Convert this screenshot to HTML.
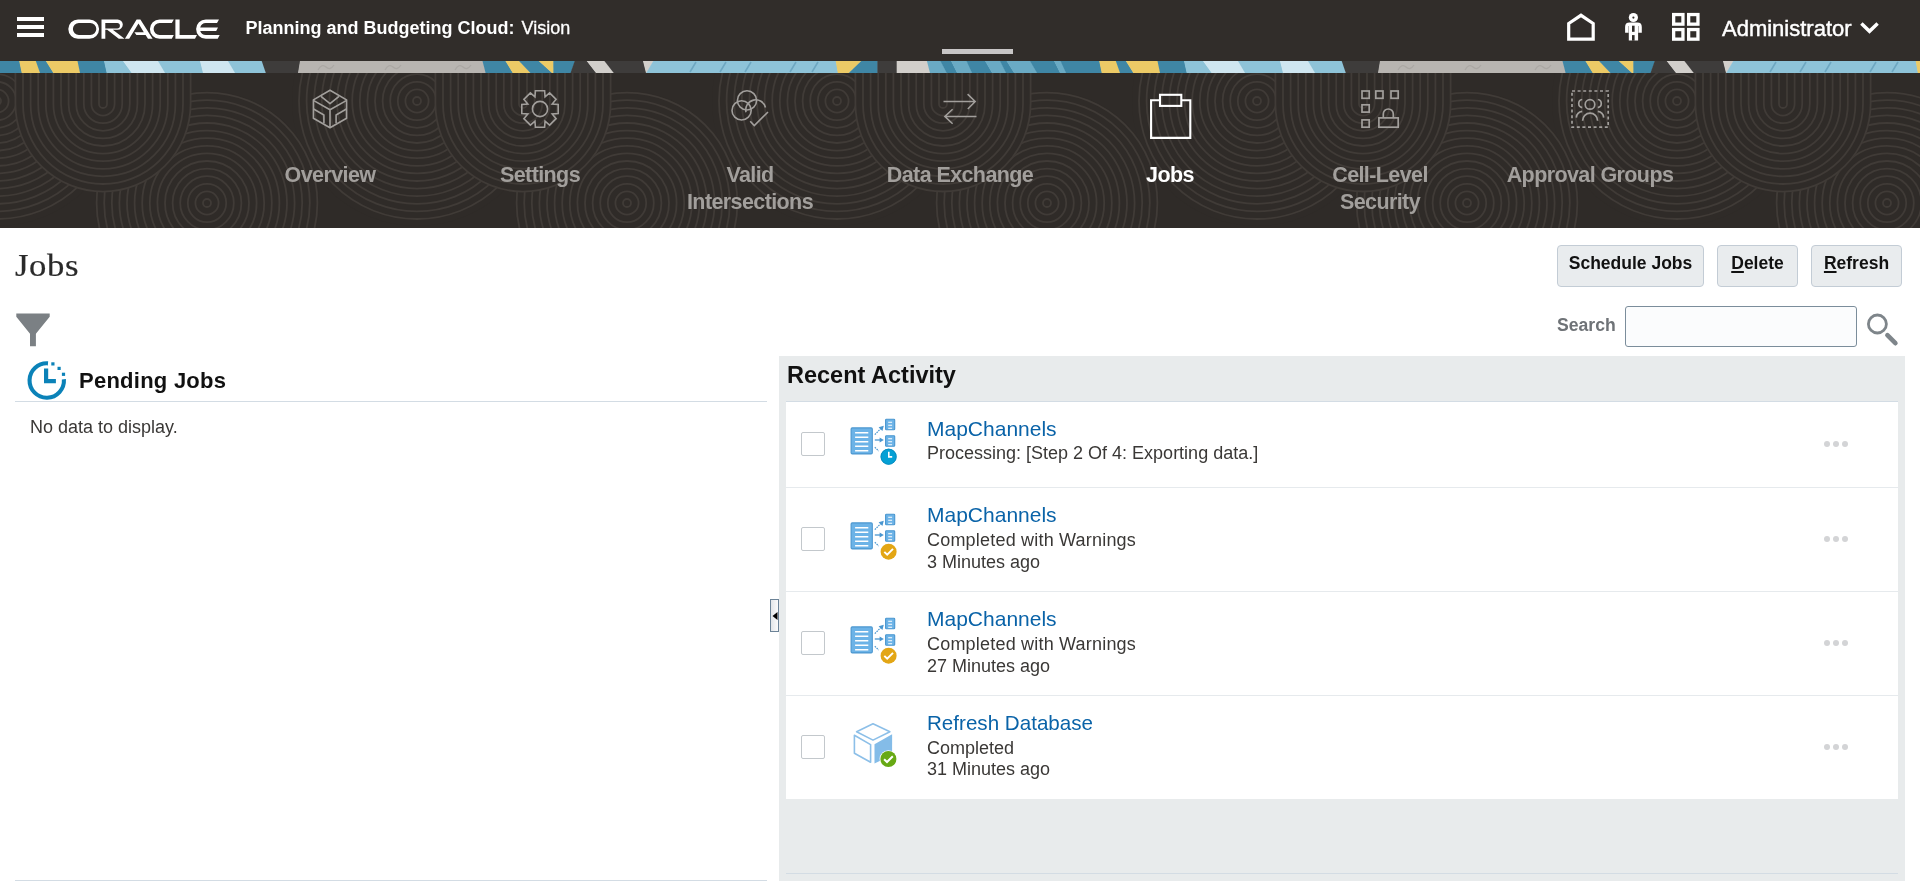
<!DOCTYPE html>
<html><head><meta charset="utf-8"><title>Jobs</title>
<style>
html,body{margin:0;padding:0;}
body{width:1920px;height:891px;overflow:hidden;position:relative;background:#fff;font-family:'Liberation Sans', sans-serif;}
#root{position:absolute;left:0;top:0;width:1920px;height:891px;will-change:transform;}
.btn{position:absolute;top:245px;height:42px;box-sizing:border-box;border:1px solid #c3ccd5;border-radius:4px;background:#e9ecee;text-align:center;font-family:'Liberation Sans', sans-serif;font-weight:700;font-size:17.5px;line-height:34px;color:#111;}
.btn u{text-decoration:underline;text-underline-offset:2px;text-decoration-thickness:1.5px}
</style></head><body><div id="root">
<div style="position:absolute;left:0;top:0;width:1920px;height:61px;background:#312d2a"></div>
<svg style="position:absolute;left:17px;top:17px" width="28" height="21"><rect x="0" y="0" width="27" height="4" fill="#fff"/><rect x="0" y="8" width="27" height="4" fill="#fff"/><rect x="0" y="16" width="27" height="4" fill="#fff"/></svg>
<svg style="position:absolute;left:0;top:0" width="230" height="60" fill="#ffffff">
<path fill-rule="evenodd" d="M78 19.4 H89.4 A9.7 9.7 0 0 1 89.4 38.8 H78 A9.7 9.7 0 0 1 78 19.4 Z M78.9 23.1 H90.3 A6 6 0 0 1 90.3 35.1 H78.9 A6 6 0 0 1 78.9 23.1 Z"/>
<path fill-rule="evenodd" d="M101.5 19.4 H117.6 A5.2 5.2 0 0 1 117.6 29.8 H112.8 L124.6 38.8 H118.8 L107.2 29.8 H105.3 V38.8 H101.5 Z M105.3 23.1 H117.2 A2.7 2.7 0 0 1 117.2 28.5 H105.3 Z"/>
<path d="M136.6 19.4 H140.4 L152.6 38.8 H148 L145.6 35.1 H136.4 L134.4 32.3 H143.8 L138.5 23.6 L129.2 38.8 H124.9 Z"/>
<path d="M159.6 19.4 H173.8 L171.8 23.1 H159.6 A6 6 0 0 0 159.6 35.1 H173.8 L171.8 38.8 H159.6 A9.7 9.7 0 0 1 159.6 19.4 Z"/>
<path d="M175.4 19.4 H179.6 V35.1 H197 L195 38.8 H175.4 Z"/>
<path d="M205.8 19.4 H219 L217 23.1 H205.8 A6 6 0 0 0 200.2 27.4 H218 L216.2 31.1 H200.2 A6 6 0 0 0 205.8 35.1 H219.7 L217.7 38.8 H205.8 A9.7 9.7 0 0 1 205.8 19.4 Z"/>
</svg>
<div style="position:absolute;left:245.5px;top:18.76px;font-family:'Liberation Sans', sans-serif;font-size:18px;line-height:18px;font-weight:700;color:#fff;white-space:pre;">Planning and Budgeting Cloud:</div>
<div style="position:absolute;left:521.5px;top:18.76px;font-family:'Liberation Sans', sans-serif;font-size:18px;line-height:18px;font-weight:400;color:#fff;white-space:pre;-webkit-text-stroke:0.3px #fff">Vision</div>
<svg style="position:absolute;left:1550px;top:0" width="160" height="60">
<path d="M1568.7 23.5 L1581 15.3 L1593.2 23.5 V39.2 H1568.7 Z" transform="translate(-1550 0)" fill="none" stroke="#fff" stroke-width="3.2" stroke-linejoin="miter"/>
<g transform="translate(-1550 0)" fill="#fff">
<circle cx="1633.4" cy="17.5" r="4.6"/>
<circle cx="1633.4" cy="17.6" r="1.1" fill="#312d2a"/>
<path d="M1625.1 32.8 V27 Q1625.1 22.6 1629.5 22.6 H1637.4 Q1641.8 22.6 1641.8 27 V32.8 H1638.1 V40.6 H1628.8 V32.8 Z"/>
<rect x="1632" y="25.7" width="2.6" height="6.1" fill="#312d2a"/>
<rect x="1632" y="35.1" width="2.6" height="5.6" fill="#312d2a"/>
<rect x="1628.3" y="26" width="0.6" height="6.8" fill="#312d2a" opacity="0.6"/>
<rect x="1638" y="26" width="0.6" height="6.8" fill="#312d2a" opacity="0.6"/>
</g>
<g transform="translate(-1550 0)" fill="none" stroke="#fff" stroke-width="3.3">
<rect x="1673.65" y="14.55" width="9.3" height="9.6"/>
<rect x="1688.65" y="14.55" width="9.3" height="9.6"/>
<rect x="1673.65" y="29.55" width="9.3" height="9.6"/>
<rect x="1688.65" y="29.55" width="9.3" height="9.6"/>
</g>
</svg>
<svg style="position:absolute;left:1850px;top:10px" width="40" height="40"><path d="M11.4 13.4 L19.5 21.2 L27.6 13.4" fill="none" stroke="#fff" stroke-width="3.5"/></svg>
<div style="position:absolute;left:1722px;top:18.38px;font-family:'Liberation Sans', sans-serif;font-size:22px;line-height:22px;font-weight:400;color:#fff;white-space:pre;-webkit-text-stroke:0.45px #fff">Administrator</div>
<div style="position:absolute;left:942px;top:49px;width:71px;height:5px;background:#c8c6c6"></div>
<svg width="1920" height="12" style="position:absolute;left:0;top:61px;display:block"><polygon points="-19.5,0 0.5,0 0.5,12 -14,12" fill="#3f86a5"/><polygon points="-0.1,0 19.7,0 22.2,12 -0.1,12" fill="#3f86a5"/><polygon points="19.2,0 36.3,0 40.5,12 21.7,12" fill="#ecca66"/><polygon points="35.8,0 46.3,0 53.8,12 40,12" fill="#3f86a5"/><polygon points="45.8,0 78,0 80.5,12 53.3,12" fill="#ecca66"/><polygon points="77.5,0 104.5,0 107.2,12 80,12" fill="#3f86a5"/><polygon points="104,0 123.5,0 132.2,12 106.7,12" fill="#8ec3d8"/><polygon points="123,0 158.5,0 165.5,12 131.7,12" fill="#cfe6f0"/><polygon points="158,0 200.5,0 203.5,12 165,12" fill="#8ec3d8"/><polygon points="200,0 228.5,0 235.5,12 203,12" fill="#cfe6f0"/><polygon points="228,0 262.2,0 266.3,12 235,12" fill="#8ec3d8"/><polygon points="261.7,0 300.5,0 298.5,12 265.8,12" fill="#3e3c3b"/><polygon points="300,0 483,0 486.1,12 298,12" fill="#b8b5b1"/><polygon points="482.5,0 505.9,0 513.2,12 485.6,12" fill="#3f86a5"/><polygon points="505.4,0 519.5,0 530.9,12 512.7,12" fill="#ecca66"/><polygon points="519,0 539.25,0 552.5,12 530.4,12" fill="#3f86a5"/><polygon points="538.75,0 553.8,0 553.9,12 552,12" fill="#ecca66"/><polygon points="553.3,0 575.2,0 571,12 553.4,12" fill="#3f86a5"/><polygon points="574.7,0 587.2,0 596.5,12 570.5,12" fill="#3e3c3b"/><polygon points="586.7,0 604.9,0 614.25,12 596,12" fill="#d2cfcb"/><polygon points="604.4,0 643.5,0 646.5,12 613.75,12" fill="#3e3c3b"/><polygon points="643,0 653.8,0 646.7,12 646,12" fill="#d2cfcb"/><polygon points="653.3,0 836.2,0 838.3,12 646.2,12" fill="#8ec3d8"/><polygon points="835.7,0 861.75,0 849.25,12 837.8,12" fill="#ecca66"/><polygon points="861.25,0 877.9,0 877.9,12 848.75,12" fill="#3f86a5"/><polygon points="877.4,0 897.2,0 897.2,12 877.4,12" fill="#3e3c3b"/><polygon points="896.7,0 927.4,0 930.5,12 896.7,12" fill="#d2cfcb"/><polygon points="926.9,0 940.9,0 947.2,12 930,12" fill="#6aaac4"/><polygon points="940.4,0 951.5,0 957.5,12 946.7,12" fill="#3f86a5"/><polygon points="951,0 967,0 972.5,12 957,12" fill="#6aaac4"/><polygon points="966.5,0 985.5,0 992.5,12 972,12" fill="#3f86a5"/><polygon points="985,0 1000.5,0 1006.5,12 992,12" fill="#6aaac4"/><polygon points="1000,0 1007,0 1014.5,12 1006,12" fill="#3f86a5"/><polygon points="1006.5,0 1030.5,0 1037.5,12 1014,12" fill="#6aaac4"/><polygon points="1030,0 1054.5,0 1060.5,12 1037,12" fill="#3f86a5"/><polygon points="1054,0 1061,0 1066.5,12 1060,12" fill="#6aaac4"/><polygon points="1060.5,0 1080.5,0 1080.5,12 1066,12" fill="#3f86a5"/><polygon points="1079.9,0 1099.7,0 1102.2,12 1079.9,12" fill="#3f86a5"/><polygon points="1099.2,0 1116.3,0 1120.5,12 1101.7,12" fill="#ecca66"/><polygon points="1115.8,0 1126.3,0 1133.8,12 1120,12" fill="#3f86a5"/><polygon points="1125.8,0 1158,0 1160.5,12 1133.3,12" fill="#ecca66"/><polygon points="1157.5,0 1184.5,0 1187.2,12 1160,12" fill="#3f86a5"/><polygon points="1184,0 1203.5,0 1212.2,12 1186.7,12" fill="#8ec3d8"/><polygon points="1203,0 1238.5,0 1245.5,12 1211.7,12" fill="#cfe6f0"/><polygon points="1238,0 1280.5,0 1283.5,12 1245,12" fill="#8ec3d8"/><polygon points="1280,0 1308.5,0 1315.5,12 1283,12" fill="#cfe6f0"/><polygon points="1308,0 1342.2,0 1346.3,12 1315,12" fill="#8ec3d8"/><polygon points="1341.7,0 1380.5,0 1378.5,12 1345.8,12" fill="#3e3c3b"/><polygon points="1380,0 1563,0 1566.1,12 1378,12" fill="#b8b5b1"/><polygon points="1562.5,0 1585.9,0 1593.2,12 1565.6,12" fill="#3f86a5"/><polygon points="1585.4,0 1599.5,0 1610.9,12 1592.7,12" fill="#ecca66"/><polygon points="1599,0 1619.25,0 1632.5,12 1610.4,12" fill="#3f86a5"/><polygon points="1618.75,0 1633.8,0 1633.9,12 1632,12" fill="#ecca66"/><polygon points="1633.3,0 1655.2,0 1651,12 1633.4,12" fill="#3f86a5"/><polygon points="1654.7,0 1667.2,0 1676.5,12 1650.5,12" fill="#3e3c3b"/><polygon points="1666.7,0 1684.9,0 1694.25,12 1676,12" fill="#d2cfcb"/><polygon points="1684.4,0 1723.5,0 1726.5,12 1693.75,12" fill="#3e3c3b"/><polygon points="1723,0 1733.8,0 1726.7,12 1726,12" fill="#d2cfcb"/><polygon points="1733.3,0 1916.2,0 1918.3,12 1726.2,12" fill="#8ec3d8"/><polygon points="1915.7,0 1941.75,0 1929.25,12 1917.8,12" fill="#ecca66"/><path d="M690 11 L696 1" stroke="#6ea7c1" stroke-width="1.6"/><path d="M720 11 L726 1" stroke="#6ea7c1" stroke-width="1.6"/><path d="M745 11 L751 1" stroke="#6ea7c1" stroke-width="1.6"/><path d="M790 11 L796 1" stroke="#6ea7c1" stroke-width="1.6"/><path d="M812 11 L818 1" stroke="#6ea7c1" stroke-width="1.6"/><path d="M318 9 q4 -7 8 -3 t8 -2" stroke="#aaa7a3" stroke-width="1.3" fill="none"/><path d="M385 9 q4 -7 8 -3 t8 -2" stroke="#aaa7a3" stroke-width="1.3" fill="none"/><path d="M455 9 q4 -7 8 -3 t8 -2" stroke="#aaa7a3" stroke-width="1.3" fill="none"/><path d="M1770 11 L1776 1" stroke="#6ea7c1" stroke-width="1.6"/><path d="M1800 11 L1806 1" stroke="#6ea7c1" stroke-width="1.6"/><path d="M1825 11 L1831 1" stroke="#6ea7c1" stroke-width="1.6"/><path d="M1870 11 L1876 1" stroke="#6ea7c1" stroke-width="1.6"/><path d="M1892 11 L1898 1" stroke="#6ea7c1" stroke-width="1.6"/><path d="M1398 9 q4 -7 8 -3 t8 -2" stroke="#aaa7a3" stroke-width="1.3" fill="none"/><path d="M1465 9 q4 -7 8 -3 t8 -2" stroke="#aaa7a3" stroke-width="1.3" fill="none"/><path d="M1535 9 q4 -7 8 -3 t8 -2" stroke="#aaa7a3" stroke-width="1.3" fill="none"/></svg>
<div style="position:absolute;left:0;top:73px;width:1920px;height:155px;background:#2f2b28;overflow:hidden"><svg width="1920" height="155" style="position:absolute;left:0;top:0"><g fill="none" stroke="#403b37" stroke-width="1.8"><circle cx="-3" cy="28" r="125" fill="#2f2b28" stroke="none"/><circle cx="-3" cy="28" r="4"/><circle cx="-3" cy="28" r="11.6"/><circle cx="-3" cy="28" r="19.2"/><circle cx="-3" cy="28" r="26.8"/><circle cx="-3" cy="28" r="34.4"/><circle cx="-3" cy="28" r="42"/><circle cx="-3" cy="28" r="49.6"/><circle cx="-3" cy="28" r="57.2"/><circle cx="-3" cy="28" r="64.8"/><circle cx="-3" cy="28" r="72.4"/><circle cx="-3" cy="28" r="80"/><circle cx="-3" cy="28" r="87.6"/><circle cx="-3" cy="28" r="95.2"/><circle cx="-3" cy="28" r="102.8"/><circle cx="-3" cy="28" r="110.4"/><circle cx="-3" cy="28" r="118"/><circle cx="417" cy="28" r="125" fill="#2f2b28" stroke="none"/><circle cx="417" cy="28" r="4"/><circle cx="417" cy="28" r="11.6"/><circle cx="417" cy="28" r="19.2"/><circle cx="417" cy="28" r="26.8"/><circle cx="417" cy="28" r="34.4"/><circle cx="417" cy="28" r="42"/><circle cx="417" cy="28" r="49.6"/><circle cx="417" cy="28" r="57.2"/><circle cx="417" cy="28" r="64.8"/><circle cx="417" cy="28" r="72.4"/><circle cx="417" cy="28" r="80"/><circle cx="417" cy="28" r="87.6"/><circle cx="417" cy="28" r="95.2"/><circle cx="417" cy="28" r="102.8"/><circle cx="417" cy="28" r="110.4"/><circle cx="417" cy="28" r="118"/><circle cx="837" cy="28" r="125" fill="#2f2b28" stroke="none"/><circle cx="837" cy="28" r="4"/><circle cx="837" cy="28" r="11.6"/><circle cx="837" cy="28" r="19.2"/><circle cx="837" cy="28" r="26.8"/><circle cx="837" cy="28" r="34.4"/><circle cx="837" cy="28" r="42"/><circle cx="837" cy="28" r="49.6"/><circle cx="837" cy="28" r="57.2"/><circle cx="837" cy="28" r="64.8"/><circle cx="837" cy="28" r="72.4"/><circle cx="837" cy="28" r="80"/><circle cx="837" cy="28" r="87.6"/><circle cx="837" cy="28" r="95.2"/><circle cx="837" cy="28" r="102.8"/><circle cx="837" cy="28" r="110.4"/><circle cx="837" cy="28" r="118"/><circle cx="1257" cy="28" r="125" fill="#2f2b28" stroke="none"/><circle cx="1257" cy="28" r="4"/><circle cx="1257" cy="28" r="11.6"/><circle cx="1257" cy="28" r="19.2"/><circle cx="1257" cy="28" r="26.8"/><circle cx="1257" cy="28" r="34.4"/><circle cx="1257" cy="28" r="42"/><circle cx="1257" cy="28" r="49.6"/><circle cx="1257" cy="28" r="57.2"/><circle cx="1257" cy="28" r="64.8"/><circle cx="1257" cy="28" r="72.4"/><circle cx="1257" cy="28" r="80"/><circle cx="1257" cy="28" r="87.6"/><circle cx="1257" cy="28" r="95.2"/><circle cx="1257" cy="28" r="102.8"/><circle cx="1257" cy="28" r="110.4"/><circle cx="1257" cy="28" r="118"/><circle cx="1677" cy="28" r="125" fill="#2f2b28" stroke="none"/><circle cx="1677" cy="28" r="4"/><circle cx="1677" cy="28" r="11.6"/><circle cx="1677" cy="28" r="19.2"/><circle cx="1677" cy="28" r="26.8"/><circle cx="1677" cy="28" r="34.4"/><circle cx="1677" cy="28" r="42"/><circle cx="1677" cy="28" r="49.6"/><circle cx="1677" cy="28" r="57.2"/><circle cx="1677" cy="28" r="64.8"/><circle cx="1677" cy="28" r="72.4"/><circle cx="1677" cy="28" r="80"/><circle cx="1677" cy="28" r="87.6"/><circle cx="1677" cy="28" r="95.2"/><circle cx="1677" cy="28" r="102.8"/><circle cx="1677" cy="28" r="110.4"/><circle cx="1677" cy="28" r="118"/><circle cx="2097" cy="28" r="125" fill="#2f2b28" stroke="none"/><circle cx="2097" cy="28" r="4"/><circle cx="2097" cy="28" r="11.6"/><circle cx="2097" cy="28" r="19.2"/><circle cx="2097" cy="28" r="26.8"/><circle cx="2097" cy="28" r="34.4"/><circle cx="2097" cy="28" r="42"/><circle cx="2097" cy="28" r="49.6"/><circle cx="2097" cy="28" r="57.2"/><circle cx="2097" cy="28" r="64.8"/><circle cx="2097" cy="28" r="72.4"/><circle cx="2097" cy="28" r="80"/><circle cx="2097" cy="28" r="87.6"/><circle cx="2097" cy="28" r="95.2"/><circle cx="2097" cy="28" r="102.8"/><circle cx="2097" cy="28" r="110.4"/><circle cx="2097" cy="28" r="118"/><circle cx="2517" cy="28" r="125" fill="#2f2b28" stroke="none"/><circle cx="2517" cy="28" r="4"/><circle cx="2517" cy="28" r="11.6"/><circle cx="2517" cy="28" r="19.2"/><circle cx="2517" cy="28" r="26.8"/><circle cx="2517" cy="28" r="34.4"/><circle cx="2517" cy="28" r="42"/><circle cx="2517" cy="28" r="49.6"/><circle cx="2517" cy="28" r="57.2"/><circle cx="2517" cy="28" r="64.8"/><circle cx="2517" cy="28" r="72.4"/><circle cx="2517" cy="28" r="80"/><circle cx="2517" cy="28" r="87.6"/><circle cx="2517" cy="28" r="95.2"/><circle cx="2517" cy="28" r="102.8"/><circle cx="2517" cy="28" r="110.4"/><circle cx="2517" cy="28" r="118"/><circle cx="-213" cy="130" r="112" fill="#2f2b28" stroke="none"/><circle cx="-213" cy="130" r="4"/><circle cx="-213" cy="130" r="11.6"/><circle cx="-213" cy="130" r="19.2"/><circle cx="-213" cy="130" r="26.8"/><circle cx="-213" cy="130" r="34.4"/><circle cx="-213" cy="130" r="42"/><circle cx="-213" cy="130" r="49.6"/><circle cx="-213" cy="130" r="57.2"/><circle cx="-213" cy="130" r="64.8"/><circle cx="-213" cy="130" r="72.4"/><circle cx="-213" cy="130" r="80"/><circle cx="-213" cy="130" r="87.6"/><circle cx="-213" cy="130" r="95.2"/><circle cx="-213" cy="130" r="102.8"/><circle cx="-213" cy="130" r="110.4"/><circle cx="207" cy="130" r="112" fill="#2f2b28" stroke="none"/><circle cx="207" cy="130" r="4"/><circle cx="207" cy="130" r="11.6"/><circle cx="207" cy="130" r="19.2"/><circle cx="207" cy="130" r="26.8"/><circle cx="207" cy="130" r="34.4"/><circle cx="207" cy="130" r="42"/><circle cx="207" cy="130" r="49.6"/><circle cx="207" cy="130" r="57.2"/><circle cx="207" cy="130" r="64.8"/><circle cx="207" cy="130" r="72.4"/><circle cx="207" cy="130" r="80"/><circle cx="207" cy="130" r="87.6"/><circle cx="207" cy="130" r="95.2"/><circle cx="207" cy="130" r="102.8"/><circle cx="207" cy="130" r="110.4"/><circle cx="627" cy="130" r="112" fill="#2f2b28" stroke="none"/><circle cx="627" cy="130" r="4"/><circle cx="627" cy="130" r="11.6"/><circle cx="627" cy="130" r="19.2"/><circle cx="627" cy="130" r="26.8"/><circle cx="627" cy="130" r="34.4"/><circle cx="627" cy="130" r="42"/><circle cx="627" cy="130" r="49.6"/><circle cx="627" cy="130" r="57.2"/><circle cx="627" cy="130" r="64.8"/><circle cx="627" cy="130" r="72.4"/><circle cx="627" cy="130" r="80"/><circle cx="627" cy="130" r="87.6"/><circle cx="627" cy="130" r="95.2"/><circle cx="627" cy="130" r="102.8"/><circle cx="627" cy="130" r="110.4"/><circle cx="1047" cy="130" r="112" fill="#2f2b28" stroke="none"/><circle cx="1047" cy="130" r="4"/><circle cx="1047" cy="130" r="11.6"/><circle cx="1047" cy="130" r="19.2"/><circle cx="1047" cy="130" r="26.8"/><circle cx="1047" cy="130" r="34.4"/><circle cx="1047" cy="130" r="42"/><circle cx="1047" cy="130" r="49.6"/><circle cx="1047" cy="130" r="57.2"/><circle cx="1047" cy="130" r="64.8"/><circle cx="1047" cy="130" r="72.4"/><circle cx="1047" cy="130" r="80"/><circle cx="1047" cy="130" r="87.6"/><circle cx="1047" cy="130" r="95.2"/><circle cx="1047" cy="130" r="102.8"/><circle cx="1047" cy="130" r="110.4"/><circle cx="1467" cy="130" r="112" fill="#2f2b28" stroke="none"/><circle cx="1467" cy="130" r="4"/><circle cx="1467" cy="130" r="11.6"/><circle cx="1467" cy="130" r="19.2"/><circle cx="1467" cy="130" r="26.8"/><circle cx="1467" cy="130" r="34.4"/><circle cx="1467" cy="130" r="42"/><circle cx="1467" cy="130" r="49.6"/><circle cx="1467" cy="130" r="57.2"/><circle cx="1467" cy="130" r="64.8"/><circle cx="1467" cy="130" r="72.4"/><circle cx="1467" cy="130" r="80"/><circle cx="1467" cy="130" r="87.6"/><circle cx="1467" cy="130" r="95.2"/><circle cx="1467" cy="130" r="102.8"/><circle cx="1467" cy="130" r="110.4"/><circle cx="1887" cy="130" r="112" fill="#2f2b28" stroke="none"/><circle cx="1887" cy="130" r="4"/><circle cx="1887" cy="130" r="11.6"/><circle cx="1887" cy="130" r="19.2"/><circle cx="1887" cy="130" r="26.8"/><circle cx="1887" cy="130" r="34.4"/><circle cx="1887" cy="130" r="42"/><circle cx="1887" cy="130" r="49.6"/><circle cx="1887" cy="130" r="57.2"/><circle cx="1887" cy="130" r="64.8"/><circle cx="1887" cy="130" r="72.4"/><circle cx="1887" cy="130" r="80"/><circle cx="1887" cy="130" r="87.6"/><circle cx="1887" cy="130" r="95.2"/><circle cx="1887" cy="130" r="102.8"/><circle cx="1887" cy="130" r="110.4"/><circle cx="2307" cy="130" r="112" fill="#2f2b28" stroke="none"/><circle cx="2307" cy="130" r="4"/><circle cx="2307" cy="130" r="11.6"/><circle cx="2307" cy="130" r="19.2"/><circle cx="2307" cy="130" r="26.8"/><circle cx="2307" cy="130" r="34.4"/><circle cx="2307" cy="130" r="42"/><circle cx="2307" cy="130" r="49.6"/><circle cx="2307" cy="130" r="57.2"/><circle cx="2307" cy="130" r="64.8"/><circle cx="2307" cy="130" r="72.4"/><circle cx="2307" cy="130" r="80"/><circle cx="2307" cy="130" r="87.6"/><circle cx="2307" cy="130" r="95.2"/><circle cx="2307" cy="130" r="102.8"/><circle cx="2307" cy="130" r="110.4"/><path d="M-405 -269 V31 A88 88 0 0 0 -229 31 V-269 Z" fill="#2f2b28" stroke="none"/><path d="M-321 -269 V31 A4 4 0 0 0 -313 31 V-269 M-328.6 -269 V31 A11.6 11.6 0 0 0 -305.4 31 V-269 M-336.2 -269 V31 A19.2 19.2 0 0 0 -297.8 31 V-269 M-343.8 -269 V31 A26.8 26.8 0 0 0 -290.2 31 V-269 M-351.4 -269 V31 A34.4 34.4 0 0 0 -282.6 31 V-269 M-359 -269 V31 A42 42 0 0 0 -275 31 V-269 M-366.6 -269 V31 A49.6 49.6 0 0 0 -267.4 31 V-269 M-374.2 -269 V31 A57.2 57.2 0 0 0 -259.8 31 V-269 M-381.8 -269 V31 A64.8 64.8 0 0 0 -252.2 31 V-269 M-389.4 -269 V31 A72.4 72.4 0 0 0 -244.6 31 V-269 M-397 -269 V31 A80 80 0 0 0 -237 31 V-269 M-404.6 -269 V31 A87.6 87.6 0 0 0 -229.4 31 V-269 "/><path d="M15 -269 V31 A88 88 0 0 0 191 31 V-269 Z" fill="#2f2b28" stroke="none"/><path d="M99 -269 V31 A4 4 0 0 0 107 31 V-269 M91.4 -269 V31 A11.6 11.6 0 0 0 114.6 31 V-269 M83.8 -269 V31 A19.2 19.2 0 0 0 122.2 31 V-269 M76.2 -269 V31 A26.8 26.8 0 0 0 129.8 31 V-269 M68.6 -269 V31 A34.4 34.4 0 0 0 137.4 31 V-269 M61 -269 V31 A42 42 0 0 0 145 31 V-269 M53.4 -269 V31 A49.6 49.6 0 0 0 152.6 31 V-269 M45.8 -269 V31 A57.2 57.2 0 0 0 160.2 31 V-269 M38.2 -269 V31 A64.8 64.8 0 0 0 167.8 31 V-269 M30.6 -269 V31 A72.4 72.4 0 0 0 175.4 31 V-269 M23 -269 V31 A80 80 0 0 0 183 31 V-269 M15.4 -269 V31 A87.6 87.6 0 0 0 190.6 31 V-269 "/><path d="M435 -269 V31 A88 88 0 0 0 611 31 V-269 Z" fill="#2f2b28" stroke="none"/><path d="M519 -269 V31 A4 4 0 0 0 527 31 V-269 M511.4 -269 V31 A11.6 11.6 0 0 0 534.6 31 V-269 M503.8 -269 V31 A19.2 19.2 0 0 0 542.2 31 V-269 M496.2 -269 V31 A26.8 26.8 0 0 0 549.8 31 V-269 M488.6 -269 V31 A34.4 34.4 0 0 0 557.4 31 V-269 M481 -269 V31 A42 42 0 0 0 565 31 V-269 M473.4 -269 V31 A49.6 49.6 0 0 0 572.6 31 V-269 M465.8 -269 V31 A57.2 57.2 0 0 0 580.2 31 V-269 M458.2 -269 V31 A64.8 64.8 0 0 0 587.8 31 V-269 M450.6 -269 V31 A72.4 72.4 0 0 0 595.4 31 V-269 M443 -269 V31 A80 80 0 0 0 603 31 V-269 M435.4 -269 V31 A87.6 87.6 0 0 0 610.6 31 V-269 "/><path d="M855 -269 V31 A88 88 0 0 0 1031 31 V-269 Z" fill="#2f2b28" stroke="none"/><path d="M939 -269 V31 A4 4 0 0 0 947 31 V-269 M931.4 -269 V31 A11.6 11.6 0 0 0 954.6 31 V-269 M923.8 -269 V31 A19.2 19.2 0 0 0 962.2 31 V-269 M916.2 -269 V31 A26.8 26.8 0 0 0 969.8 31 V-269 M908.6 -269 V31 A34.4 34.4 0 0 0 977.4 31 V-269 M901 -269 V31 A42 42 0 0 0 985 31 V-269 M893.4 -269 V31 A49.6 49.6 0 0 0 992.6 31 V-269 M885.8 -269 V31 A57.2 57.2 0 0 0 1000.2 31 V-269 M878.2 -269 V31 A64.8 64.8 0 0 0 1007.8 31 V-269 M870.6 -269 V31 A72.4 72.4 0 0 0 1015.4 31 V-269 M863 -269 V31 A80 80 0 0 0 1023 31 V-269 M855.4 -269 V31 A87.6 87.6 0 0 0 1030.6 31 V-269 "/><path d="M1275 -269 V31 A88 88 0 0 0 1451 31 V-269 Z" fill="#2f2b28" stroke="none"/><path d="M1359 -269 V31 A4 4 0 0 0 1367 31 V-269 M1351.4 -269 V31 A11.6 11.6 0 0 0 1374.6 31 V-269 M1343.8 -269 V31 A19.2 19.2 0 0 0 1382.2 31 V-269 M1336.2 -269 V31 A26.8 26.8 0 0 0 1389.8 31 V-269 M1328.6 -269 V31 A34.4 34.4 0 0 0 1397.4 31 V-269 M1321 -269 V31 A42 42 0 0 0 1405 31 V-269 M1313.4 -269 V31 A49.6 49.6 0 0 0 1412.6 31 V-269 M1305.8 -269 V31 A57.2 57.2 0 0 0 1420.2 31 V-269 M1298.2 -269 V31 A64.8 64.8 0 0 0 1427.8 31 V-269 M1290.6 -269 V31 A72.4 72.4 0 0 0 1435.4 31 V-269 M1283 -269 V31 A80 80 0 0 0 1443 31 V-269 M1275.4 -269 V31 A87.6 87.6 0 0 0 1450.6 31 V-269 "/><path d="M1695 -269 V31 A88 88 0 0 0 1871 31 V-269 Z" fill="#2f2b28" stroke="none"/><path d="M1779 -269 V31 A4 4 0 0 0 1787 31 V-269 M1771.4 -269 V31 A11.6 11.6 0 0 0 1794.6 31 V-269 M1763.8 -269 V31 A19.2 19.2 0 0 0 1802.2 31 V-269 M1756.2 -269 V31 A26.8 26.8 0 0 0 1809.8 31 V-269 M1748.6 -269 V31 A34.4 34.4 0 0 0 1817.4 31 V-269 M1741 -269 V31 A42 42 0 0 0 1825 31 V-269 M1733.4 -269 V31 A49.6 49.6 0 0 0 1832.6 31 V-269 M1725.8 -269 V31 A57.2 57.2 0 0 0 1840.2 31 V-269 M1718.2 -269 V31 A64.8 64.8 0 0 0 1847.8 31 V-269 M1710.6 -269 V31 A72.4 72.4 0 0 0 1855.4 31 V-269 M1703 -269 V31 A80 80 0 0 0 1863 31 V-269 M1695.4 -269 V31 A87.6 87.6 0 0 0 1870.6 31 V-269 "/><path d="M2115 -269 V31 A88 88 0 0 0 2291 31 V-269 Z" fill="#2f2b28" stroke="none"/><path d="M2199 -269 V31 A4 4 0 0 0 2207 31 V-269 M2191.4 -269 V31 A11.6 11.6 0 0 0 2214.6 31 V-269 M2183.8 -269 V31 A19.2 19.2 0 0 0 2222.2 31 V-269 M2176.2 -269 V31 A26.8 26.8 0 0 0 2229.8 31 V-269 M2168.6 -269 V31 A34.4 34.4 0 0 0 2237.4 31 V-269 M2161 -269 V31 A42 42 0 0 0 2245 31 V-269 M2153.4 -269 V31 A49.6 49.6 0 0 0 2252.6 31 V-269 M2145.8 -269 V31 A57.2 57.2 0 0 0 2260.2 31 V-269 M2138.2 -269 V31 A64.8 64.8 0 0 0 2267.8 31 V-269 M2130.6 -269 V31 A72.4 72.4 0 0 0 2275.4 31 V-269 M2123 -269 V31 A80 80 0 0 0 2283 31 V-269 M2115.4 -269 V31 A87.6 87.6 0 0 0 2290.6 31 V-269 "/></g></svg></div>

<svg style="position:absolute;left:300px;top:80px" width="60" height="60" fill="none" stroke="#a29f9c" stroke-width="1.6" stroke-linejoin="round">
<path d="M30 10.3 L46.6 19.9 L46.6 38.2 L30 47.8 L13.4 38.2 L13.4 19.9 Z"/>
<path d="M13.8 20.6 L30 29.8 L46.2 20.6 M30 29.8 V47.5 M21 16.3 L30 23.6 L39 16.3 M13.6 29 L23.9 35 V43.2 M46.4 29 L36.1 35 V43.2"/>
</svg>
<svg style="position:absolute;left:510px;top:80px" width="60" height="60" fill="none" stroke="#a29f9c" stroke-width="1.6" stroke-linejoin="miter">
<path d="M25.40 10.80 L34.60 10.80 L35.05 16.80 L39.62 12.88 L46.12 19.38 L42.20 23.95 L48.20 24.40 L48.20 33.60 L42.20 34.05 L46.12 38.62 L39.62 45.12 L35.05 41.20 L34.60 47.20 L25.40 47.20 L24.95 41.20 L20.38 45.12 L13.88 38.62 L17.80 34.05 L11.80 33.60 L11.80 24.40 L17.80 23.95 L13.88 19.38 L20.38 12.88 L24.95 16.80Z"/><circle cx="30" cy="29" r="7.6"/>
</svg>
<svg style="position:absolute;left:720px;top:80px" width="60" height="60" fill="none" stroke="#a29f9c" stroke-width="1.6">
<circle cx="27" cy="20.4" r="9.6"/><circle cx="21.6" cy="30.4" r="9.6"/>
<path d="M26 32.2 A10 10 0 0 1 45.5 27.5"/>
<path d="M30.2 41.3 L34.3 45.6 L48 32"/>
</svg>
<svg style="position:absolute;left:930px;top:80px" width="60" height="60" fill="none" stroke="#a29f9c" stroke-width="1.5">
<path d="M13.5 21.5 H45.3 M37.6 14.1 L45.2 21.5 L37.8 29"/>
<path d="M46.5 36.4 H14.8 M22.6 29.2 L14.8 36.4 L22.6 43.8"/>
</svg>
<svg style="position:absolute;left:1140px;top:85px" width="60" height="60" fill="none" stroke="#ffffff" stroke-width="2.1">
<path d="M19.5 15.2 H11.1 V52.9 H50.3 V15.2 H41.8"/>
<rect x="20" y="9.8" width="21.3" height="11.1"/>
</svg>
<svg style="position:absolute;left:1350px;top:80px" width="60" height="60" fill="none" stroke="#a29f9c" stroke-width="1.7">
<rect x="12" y="11" width="7.2" height="7.3"/><rect x="25.8" y="11" width="7.2" height="7.3"/><rect x="41" y="11" width="7.2" height="7.3"/>
<rect x="12" y="24.8" width="7.2" height="7.3"/><rect x="12" y="39.9" width="7.2" height="7.3"/>
<rect x="28.9" y="37.9" width="19.3" height="9.3"/>
<path d="M33.3 37.9 V34 A5 5 0 0 1 43.3 34 V37.9"/>
</svg>
<svg style="position:absolute;left:1560px;top:80px" width="60" height="60" fill="none" stroke="#a29f9c" stroke-width="1.7">
<rect x="12" y="11" width="36.2" height="36.2" stroke-dasharray="3 2.6"/>
<circle cx="30" cy="24.4" r="4.8"/>
<path d="M22.2 19.5 A4.1 4.1 0 0 0 22.2 27.6 M37.8 19.5 A4.1 4.1 0 0 1 37.8 27.6"/>
<path d="M22.6 40.7 A7.5 7.5 0 0 1 37.6 40.7"/>
<path d="M16.3 37.6 A7 7 0 0 1 22.2 31.4 M43.7 37.6 A7 7 0 0 0 37.8 31.4"/>
</svg>

<div style="position:absolute;left:225px;top:162.00px;width:210px;text-align:center;font-family:'Liberation Sans', sans-serif;font-weight:700;font-size:21.5px;letter-spacing:-0.6px;line-height:26.7px;color:#a29f9c">Overview</div><div style="position:absolute;left:435px;top:162.00px;width:210px;text-align:center;font-family:'Liberation Sans', sans-serif;font-weight:700;font-size:21.5px;letter-spacing:-0.6px;line-height:26.7px;color:#a29f9c">Settings</div><div style="position:absolute;left:645px;top:162.00px;width:210px;text-align:center;font-family:'Liberation Sans', sans-serif;font-weight:700;font-size:21.5px;letter-spacing:-0.6px;line-height:26.7px;color:#a29f9c">Valid<br>Intersections</div><div style="position:absolute;left:855px;top:162.00px;width:210px;text-align:center;font-family:'Liberation Sans', sans-serif;font-weight:700;font-size:21.5px;letter-spacing:-0.6px;line-height:26.7px;color:#a29f9c">Data Exchange</div><div style="position:absolute;left:1065px;top:162.00px;width:210px;text-align:center;font-family:'Liberation Sans', sans-serif;font-weight:700;font-size:21.5px;letter-spacing:-0.6px;line-height:26.7px;color:#ffffff">Jobs</div><div style="position:absolute;left:1275px;top:162.00px;width:210px;text-align:center;font-family:'Liberation Sans', sans-serif;font-weight:700;font-size:21.5px;letter-spacing:-0.6px;line-height:26.7px;color:#a29f9c">Cell-Level<br>Security</div><div style="position:absolute;left:1485px;top:162.00px;width:210px;text-align:center;font-family:'Liberation Sans', sans-serif;font-weight:700;font-size:21.5px;letter-spacing:-0.6px;line-height:26.7px;color:#a29f9c">Approval Groups</div>
<div style="position:absolute;left:14.5px;top:249.54px;font-family:'Liberation Serif', serif;font-size:31px;line-height:31px;font-weight:400;color:#2a2a2a;white-space:pre;-webkit-text-stroke:0.2px #2a2a2a;letter-spacing:0.5px;transform:scaleX(1.12);transform-origin:0 0">Jobs</div>
<div class="btn" style="left:1557px;width:147px">Schedule Jobs</div>
<div class="btn" style="left:1717px;width:81px"><u>D</u>elete</div>
<div class="btn" style="left:1811px;width:91px"><u>R</u>efresh</div>
<svg style="position:absolute;left:0;top:300px" width="60" height="60"><polygon points="16.3,13.5 49.7,13.5 49.7,16.8 35.9,33.7 35.9,46.3 30,46.3 30,33.7 16.3,16.8" fill="#7b8084"/></svg>
<div style="position:absolute;left:1557px;top:316.90px;font-family:'Liberation Sans', sans-serif;font-size:17.6px;line-height:17.6px;font-weight:700;color:#6f7377;white-space:pre;">Search</div>
<div style="position:absolute;left:1625px;top:306px;width:232px;height:41px;box-sizing:border-box;border:1px solid #7b8d9b;border-radius:3px;background:#fbfcfd"></div>
<svg style="position:absolute;left:1860px;top:305px" width="45" height="45"><circle cx="17.4" cy="19" r="9" fill="none" stroke="#7e858a" stroke-width="2.8"/><path d="M27.4 30.2 L35.4 38.2" stroke="#7e858a" stroke-width="4.6" stroke-linecap="round"/></svg>
<svg style="position:absolute;left:25px;top:359.5px" width="45" height="45">
<path d="M23 3.35 A17.2 17.2 0 1 0 38.9 19.25" fill="none" stroke="#0b82b8" stroke-width="4.1"/>
<path d="M21.1 8.4 V21.1 H30.9" fill="none" stroke="#0b82b8" stroke-width="4.2"/>
<rect x="26.3" y="2.3" width="3.2" height="3.2" fill="#0b82b8"/><rect x="32.5" y="6.8" width="3.2" height="3.2" fill="#0b82b8"/><rect x="36.9" y="12.7" width="3.2" height="3.2" fill="#0b82b8"/>
</svg>
<div style="position:absolute;left:79px;top:369.78px;font-family:'Liberation Sans', sans-serif;font-size:22px;line-height:22px;font-weight:700;color:#111;white-space:pre;letter-spacing:0.25px">Pending Jobs</div>
<div style="position:absolute;left:15px;top:401px;width:752px;height:1px;background:#d3dce4"></div>
<div style="position:absolute;left:30px;top:417.76px;font-family:'Liberation Sans', sans-serif;font-size:18px;line-height:18px;font-weight:400;color:#3a3836;white-space:pre;">No data to display.</div>
<div style="position:absolute;left:15px;top:880px;width:752px;height:1px;background:#d3dce4"></div>
<div style="position:absolute;left:779px;top:356px;width:1126px;height:525px;background:#e8ebec"></div>
<div style="position:absolute;left:787px;top:364.41px;font-family:'Liberation Sans', sans-serif;font-size:23.5px;line-height:23.5px;font-weight:700;color:#111;white-space:pre;">Recent Activity</div>
<div style="position:absolute;left:786px;top:401px;width:1112px;height:1px;background:#d3dce4"></div>
<div style="position:absolute;left:786px;top:402px;width:1112px;height:397px;background:#fff"></div>
<div style="position:absolute;left:786px;top:873px;width:1112px;height:1px;background:#d3dce4"></div>
<div style="position:absolute;left:801px;top:432px;width:24px;height:24px;box-sizing:border-box;border:1px solid #c3c8cc;border-radius:2px;background:#fff"></div><svg style="position:absolute;left:845px;top:417px" width="56" height="52"><rect x="6.1" y="10.9" width="21.2" height="26" rx="1.2" fill="#6cb3e7" stroke="#4a96cf" stroke-width="1.1"/><path d="M10.1 15.7 H23.3 M10.1 20.2 H23.3 M10.1 24.7 H23.3 M10.1 29.2 H23.3 M10.1 33.7 H23.3" stroke="#fff" stroke-width="1.5"/><rect x="40.6" y="2.2" width="9.1" height="10.5" rx="0.8" fill="#6cb3e7" stroke="#4a96cf" stroke-width="1.1"/><path d="M43.2 5.300000000000001 H47.1 M43.2 8.3 H47.1 M43.2 11.2 H47.1" stroke="#fff" stroke-width="1.1"/><rect x="40.6" y="18.7" width="9.1" height="10.5" rx="0.8" fill="#6cb3e7" stroke="#4a96cf" stroke-width="1.1"/><path d="M43.2 21.8 H47.1 M43.2 24.799999999999997 H47.1 M43.2 27.7 H47.1" stroke="#fff" stroke-width="1.1"/><path d="M29.8 17.6 L36.2 11.2 M29.8 30.3 L33.7 34" stroke="#4a96cf" stroke-width="1.2" stroke-dasharray="1.6 0.9" fill="none"/><path d="M29.8 23 H35.4" stroke="#4a96cf" stroke-width="1.3" fill="none"/><polygon points="38.8,8.8 33.6,10.2 37.4,14" fill="#4a96cf"/><polygon points="38.8,23 34.6,20.4 34.6,25.6" fill="#4a96cf"/><circle cx="43.6" cy="39.7" r="8.8" fill="#fff"/><circle cx="43.6" cy="39.7" r="8" fill="#04a0d5"/><circle cx="43.6" cy="39.7" r="7.6" fill="none" stroke="#0a88bb" stroke-width="0.8"/><path d="M43.800000000000004 34.800000000000004 V39.900000000000006 H47.2" fill="none" stroke="#fff" stroke-width="1.6"/></svg><div style="position:absolute;left:927px;top:418.02px;font-family:'Liberation Sans', sans-serif;font-size:21px;line-height:21px;font-weight:400;color:#0a63a8;white-space:pre;">MapChannels</div><div style="position:absolute;left:927px;top:444.26px;font-family:'Liberation Sans', sans-serif;font-size:18px;line-height:18px;font-weight:400;color:#3a3836;white-space:pre;">Processing: [Step 2 Of 4: Exporting data.]</div><div style="position:absolute;left:1824px;top:441px;width:6px;height:6px;border-radius:3px;background:#d3d4d6"></div><div style="position:absolute;left:1833px;top:441px;width:6px;height:6px;border-radius:3px;background:#d3d4d6"></div><div style="position:absolute;left:1842px;top:441px;width:6px;height:6px;border-radius:3px;background:#d3d4d6"></div><div style="position:absolute;left:786px;top:487px;width:1112px;height:1px;background:#e6eaed"></div><div style="position:absolute;left:801px;top:527px;width:24px;height:24px;box-sizing:border-box;border:1px solid #c3c8cc;border-radius:2px;background:#fff"></div><svg style="position:absolute;left:845px;top:512px" width="56" height="52"><rect x="6.1" y="10.9" width="21.2" height="26" rx="1.2" fill="#6cb3e7" stroke="#4a96cf" stroke-width="1.1"/><path d="M10.1 15.7 H23.3 M10.1 20.2 H23.3 M10.1 24.7 H23.3 M10.1 29.2 H23.3 M10.1 33.7 H23.3" stroke="#fff" stroke-width="1.5"/><rect x="40.6" y="2.2" width="9.1" height="10.5" rx="0.8" fill="#6cb3e7" stroke="#4a96cf" stroke-width="1.1"/><path d="M43.2 5.300000000000001 H47.1 M43.2 8.3 H47.1 M43.2 11.2 H47.1" stroke="#fff" stroke-width="1.1"/><rect x="40.6" y="18.7" width="9.1" height="10.5" rx="0.8" fill="#6cb3e7" stroke="#4a96cf" stroke-width="1.1"/><path d="M43.2 21.8 H47.1 M43.2 24.799999999999997 H47.1 M43.2 27.7 H47.1" stroke="#fff" stroke-width="1.1"/><path d="M29.8 17.6 L36.2 11.2 M29.8 30.3 L33.7 34" stroke="#4a96cf" stroke-width="1.2" stroke-dasharray="1.6 0.9" fill="none"/><path d="M29.8 23 H35.4" stroke="#4a96cf" stroke-width="1.3" fill="none"/><polygon points="38.8,8.8 33.6,10.2 37.4,14" fill="#4a96cf"/><polygon points="38.8,23 34.6,20.4 34.6,25.6" fill="#4a96cf"/><circle cx="43.6" cy="39.7" r="8.8" fill="#fff"/><circle cx="43.6" cy="39.7" r="8" fill="#e3a615"/><path d="M39.300000000000004 39.900000000000006 L42.2 42.7 L48.0 36.900000000000006" fill="none" stroke="#fff" stroke-width="2"/></svg><div style="position:absolute;left:927px;top:504.22px;font-family:'Liberation Sans', sans-serif;font-size:21px;line-height:21px;font-weight:400;color:#0a63a8;white-space:pre;">MapChannels</div><div style="position:absolute;left:927px;top:530.76px;font-family:'Liberation Sans', sans-serif;font-size:18px;line-height:18px;font-weight:400;color:#3a3836;white-space:pre;letter-spacing:0.2px">Completed with Warnings</div><div style="position:absolute;left:927px;top:553.16px;font-family:'Liberation Sans', sans-serif;font-size:18px;line-height:18px;font-weight:400;color:#3a3836;white-space:pre;">3 Minutes ago</div><div style="position:absolute;left:1824px;top:536px;width:6px;height:6px;border-radius:3px;background:#d3d4d6"></div><div style="position:absolute;left:1833px;top:536px;width:6px;height:6px;border-radius:3px;background:#d3d4d6"></div><div style="position:absolute;left:1842px;top:536px;width:6px;height:6px;border-radius:3px;background:#d3d4d6"></div><div style="position:absolute;left:786px;top:591px;width:1112px;height:1px;background:#e6eaed"></div><div style="position:absolute;left:801px;top:631px;width:24px;height:24px;box-sizing:border-box;border:1px solid #c3c8cc;border-radius:2px;background:#fff"></div><svg style="position:absolute;left:845px;top:616px" width="56" height="52"><rect x="6.1" y="10.9" width="21.2" height="26" rx="1.2" fill="#6cb3e7" stroke="#4a96cf" stroke-width="1.1"/><path d="M10.1 15.7 H23.3 M10.1 20.2 H23.3 M10.1 24.7 H23.3 M10.1 29.2 H23.3 M10.1 33.7 H23.3" stroke="#fff" stroke-width="1.5"/><rect x="40.6" y="2.2" width="9.1" height="10.5" rx="0.8" fill="#6cb3e7" stroke="#4a96cf" stroke-width="1.1"/><path d="M43.2 5.300000000000001 H47.1 M43.2 8.3 H47.1 M43.2 11.2 H47.1" stroke="#fff" stroke-width="1.1"/><rect x="40.6" y="18.7" width="9.1" height="10.5" rx="0.8" fill="#6cb3e7" stroke="#4a96cf" stroke-width="1.1"/><path d="M43.2 21.8 H47.1 M43.2 24.799999999999997 H47.1 M43.2 27.7 H47.1" stroke="#fff" stroke-width="1.1"/><path d="M29.8 17.6 L36.2 11.2 M29.8 30.3 L33.7 34" stroke="#4a96cf" stroke-width="1.2" stroke-dasharray="1.6 0.9" fill="none"/><path d="M29.8 23 H35.4" stroke="#4a96cf" stroke-width="1.3" fill="none"/><polygon points="38.8,8.8 33.6,10.2 37.4,14" fill="#4a96cf"/><polygon points="38.8,23 34.6,20.4 34.6,25.6" fill="#4a96cf"/><circle cx="43.6" cy="39.7" r="8.8" fill="#fff"/><circle cx="43.6" cy="39.7" r="8" fill="#e3a615"/><path d="M39.300000000000004 39.900000000000006 L42.2 42.7 L48.0 36.900000000000006" fill="none" stroke="#fff" stroke-width="2"/></svg><div style="position:absolute;left:927px;top:608.22px;font-family:'Liberation Sans', sans-serif;font-size:21px;line-height:21px;font-weight:400;color:#0a63a8;white-space:pre;">MapChannels</div><div style="position:absolute;left:927px;top:634.76px;font-family:'Liberation Sans', sans-serif;font-size:18px;line-height:18px;font-weight:400;color:#3a3836;white-space:pre;letter-spacing:0.2px">Completed with Warnings</div><div style="position:absolute;left:927px;top:657.16px;font-family:'Liberation Sans', sans-serif;font-size:18px;line-height:18px;font-weight:400;color:#3a3836;white-space:pre;">27 Minutes ago</div><div style="position:absolute;left:1824px;top:640px;width:6px;height:6px;border-radius:3px;background:#d3d4d6"></div><div style="position:absolute;left:1833px;top:640px;width:6px;height:6px;border-radius:3px;background:#d3d4d6"></div><div style="position:absolute;left:1842px;top:640px;width:6px;height:6px;border-radius:3px;background:#d3d4d6"></div><div style="position:absolute;left:786px;top:695px;width:1112px;height:1px;background:#e6eaed"></div><div style="position:absolute;left:801px;top:735px;width:24px;height:24px;box-sizing:border-box;border:1px solid #c3c8cc;border-radius:2px;background:#fff"></div><svg style="position:absolute;left:845px;top:715px" width="56" height="56"><polygon points="11.6,16.7 28,8.8 44.9,16.7 28,25.1" fill="none" stroke="#8cbfe8" stroke-width="1.6" stroke-linejoin="round"/><polygon points="9.4,20.2 25.6,29.6 25.6,47.3 9.4,38.2" fill="none" stroke="#8cbfe8" stroke-width="1.6" stroke-linejoin="round"/><polygon points="29.5,29.2 47.1,19.2 47.1,40 29.5,48.4" fill="#84bce8"/><circle cx="43.4" cy="44" r="8.8" fill="#fff"/><circle cx="43.4" cy="44" r="8" fill="#67a914"/><path d="M39.1 44.2 L42.0 47 L47.8 41.2" fill="none" stroke="#fff" stroke-width="2"/></svg><div style="position:absolute;left:927px;top:712.76px;font-family:'Liberation Sans', sans-serif;font-size:20.6px;line-height:20.6px;font-weight:400;color:#0a63a8;white-space:pre;">Refresh Database</div><div style="position:absolute;left:927px;top:738.66px;font-family:'Liberation Sans', sans-serif;font-size:18px;line-height:18px;font-weight:400;color:#3a3836;white-space:pre;">Completed</div><div style="position:absolute;left:927px;top:760.46px;font-family:'Liberation Sans', sans-serif;font-size:18px;line-height:18px;font-weight:400;color:#3a3836;white-space:pre;">31 Minutes ago</div><div style="position:absolute;left:1824px;top:744px;width:6px;height:6px;border-radius:3px;background:#d3d4d6"></div><div style="position:absolute;left:1833px;top:744px;width:6px;height:6px;border-radius:3px;background:#d3d4d6"></div><div style="position:absolute;left:1842px;top:744px;width:6px;height:6px;border-radius:3px;background:#d3d4d6"></div>
<div style="position:absolute;left:770px;top:599px;width:9px;height:33px;box-sizing:border-box;border:1px solid #6c8397;background:linear-gradient(to right,#e3e6e9,#fbfbfb)"></div>
<svg style="position:absolute;left:770px;top:599px" width="9" height="33"><polygon points="2.5,17 7.5,13 7.5,21" fill="#000"/></svg>
</div></body></html>
